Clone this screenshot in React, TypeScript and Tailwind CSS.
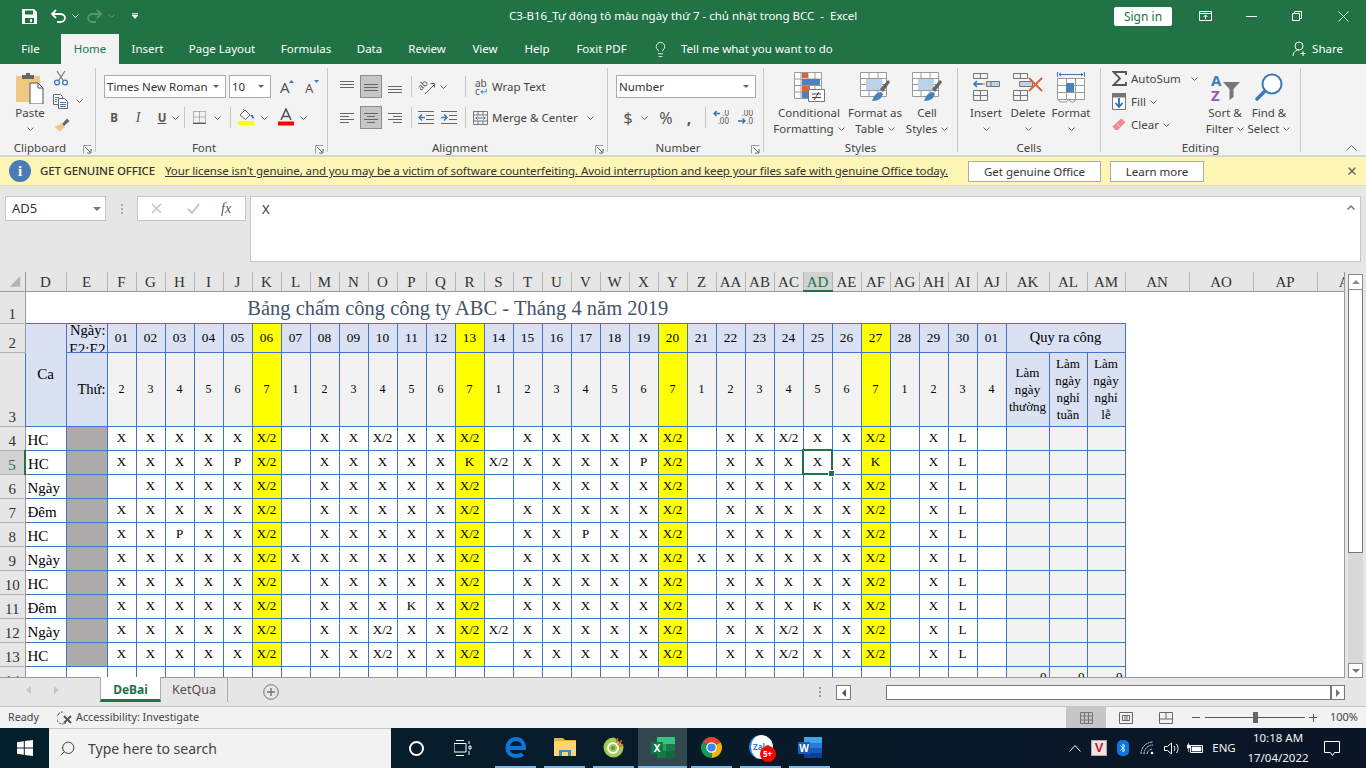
import { Lightbulb, Search, X as XIcon } from "lucide-react"
import type { ReactNode } from "react"

const Chev = ({ c = "#666" }: { c?: string }) => (
  <svg width="7" height="4" viewBox="0 0 7 4" className="shrink-0">
    <path d="M.5.5 3.5 3.5 6.5.5" fill="none" stroke={c} />
  </svg>
)

const Launcher = () => (
  <svg width="9" height="9" viewBox="0 0 9 9" className="absolute right-[3px] top-[5px]">
    <path d="M.5 8.5V.5H8.5" fill="none" stroke="#999" />
    <path d="M2.5 2.5 7.5 7.5M8 4V8H4" fill="none" stroke="#666" />
  </svg>
)

const Sep = () => <div className="w-px h-[84px] bg-[#c6c6c6] self-center shrink-0" />
const MiniSep = () => <div className="w-px h-[21px] bg-[#c6c6c6] shrink-0" />

function Group({ label, className, launcher, children }: { label: string; className: string; launcher?: boolean; children: ReactNode }) {
  return (
    <div className={`flex flex-col h-full shrink-0 ${className}`}>
      <div className="h-[76px] flex shrink-0">{children}</div>
      <div className={`h-4 shrink-0 leading-4 text-center relative text-[#444] ${launcher ? "pr-[15px]" : ""}`}>
        {label}
        {launcher && <Launcher />}
      </div>
    </div>
  )
}

function LargeBtn({ icon, l1, l2, className }: { icon: ReactNode; l1: string; l2?: string; className: string }) {
  return (
    <div className={`flex flex-col items-center pt-2 shrink-0 ${className}`}>
      <div className="h-[30px] flex items-center justify-center">{icon}</div>
      <div className="mt-[3px] leading-4 whitespace-nowrap">{l1}</div>
      <div className="h-4 leading-4 flex items-center gap-1 whitespace-nowrap">
        {l2}
        <Chev />
      </div>
    </div>
  )
}

// ---- ribbon icons
const PasteIcon = () => (
  <svg width="30" height="32" viewBox="0 0 30 32">
    <path d="M1 4h24v26H1z" fill="#eec983" />
    <path d="M7 3h4V1h4v2h4v4H7z" fill="#666" />
    <path d="M15 11h8l5 5v16H15z" fill="#fff" stroke="#555" />
    <path d="M23 11v5h5" fill="none" stroke="#555" />
  </svg>
)
const CutIcon = () => (
  <svg width="16" height="16" viewBox="0 0 16 16">
    <path d="M4 1 10 10M12 1 6 10" stroke="#777" strokeWidth="1.2" fill="none" />
    <circle cx="4" cy="12.5" r="2.4" fill="none" stroke="#3e7ab5" strokeWidth="1.3" />
    <circle cx="12" cy="12.5" r="2.4" fill="none" stroke="#3e7ab5" strokeWidth="1.3" />
  </svg>
)
const CopyIcon = () => (
  <svg width="16" height="15" viewBox="0 0 16 15">
    <path d="M.5.5h7l2 2V4M.5.5v10H5" fill="none" stroke="#666" />
    <path d="M5.5 4.5h6l3 3v7h-9z" fill="#fff" stroke="#666" />
    <path d="M2 3.5h4M2 5.5h2M2 7.5h2M7 8.5h6M7 10.5h6M7 12.5h6" stroke="#3e7ab5" />
  </svg>
)
const BrushIcon = () => (
  <svg width="17" height="15" viewBox="0 0 17 15">
    <path d="M9 7 14 1.5l2.500 2.500L11 9z" fill="#666" />
    <path d="M8 6 12 10 7 14.500 1 9.500 4 9z" fill="#eec983" />
  </svg>
)
const GrowIcon = ({ down }: { down?: boolean }) => (
  <svg width="15" height="15" viewBox="0 0 15 15">
    <text x="0" y="14" fontSize={down ? 13 : 15} fill="#555" fontFamily="Noto Sans, sans-serif">A</text>
    <path d={down ? "M9 1h5l-2.500 3z" : "M9 4h5L11.500 1z"} fill="#3e7ab5" />
  </svg>
)
const BorderIcon = () => (
  <svg width="13" height="13" viewBox="0 0 13 13">
    <path d="M.5.5h12v11H.5zM6.500.5v11M.5 6h12" fill="none" stroke="#777" strokeDasharray="1 1" />
    <path d="M0 12.500h13" stroke="#555" />
  </svg>
)
const FillIcon = () => (
  <svg width="17" height="18" viewBox="0 0 17 18">
    <path d="M2 7 7 2l5 5-4.500 4.500z" fill="#fff" stroke="#666" />
    <path d="M5 1 7 3" stroke="#666" />
    <path d="M12 7h3l1 3-1 1z" fill="#3e7ab5" />
    <path d="M0 13h16v4H0z" fill="#ffff00" />
  </svg>
)
const FontColorIcon = () => (
  <svg width="16" height="18" viewBox="0 0 16 18">
    <path d="M3 12 8 1l5 11M5 8.500h6" fill="none" stroke="#555" strokeWidth="1.600" />
    <path d="M0 13.500h16v4H0z" fill="#ff0000" />
  </svg>
)
const Lines = ({ rows }: { rows: [number, number, number][] }) => (
  <svg width="14" height="14" viewBox="0 0 14 14" className="shrink-0">
    {rows.map(([x, y, w], i) => (
      <path key={i} d={`M${x} ${y}.5h${w}`} stroke="#666" />
    ))}
  </svg>
)
const OrientIcon = () => (
  <svg width="17" height="17" viewBox="0 0 17 17">
    <text x="0" y="0" fontSize="9" fill="#555" fontFamily="Noto Sans, sans-serif" transform="translate(3 13) rotate(-45)">ab</text>
    <path d="M7 16 16 7M12.500 5.500H16.500V9.500" fill="none" stroke="#555" />
  </svg>
)
const IndentIcon = ({ rev }: { rev?: boolean }) => (
  <svg width="16" height="13" viewBox="0 0 16 13">
    <path d="M0 .5h16M8 4.500h8M8 8.500h8M0 12.500h16" stroke="#666" />
    <path d={rev ? "M1 6.500h6M4 3.500l-3 3 3 3" : "M0 6.500h6M3 3.500l3 3-3 3"} fill="none" stroke="#3e7ab5" strokeWidth="1.500" />
  </svg>
)
const MergeIcon = () => (
  <svg width="15" height="14" viewBox="0 0 15 14">
    <path d="M.5.5h14v13H.5zM.5 4h14M.5 10h14M5 .5V4M10 .5V4M5 10v3.500M10 10v3.500" fill="none" stroke="#777" />
    <path d="M2.500 7h10M4.500 5.500 3 7l1.500 1.500M10.500 5.500 12 7l-1.500 1.500" fill="none" stroke="#3e7ab5" />
  </svg>
)
const DecIcon = ({ rev }: { rev?: boolean }) => (
  <svg width="16" height="15" viewBox="0 0 16 15">
    <text x="16" y="6" textAnchor="end" fontSize="8" fill="#555" fontFamily="Noto Sans, sans-serif">{rev ? ".00" : ".0"}</text>
    <text x="16" y="14" textAnchor="end" fontSize="8" fill="#555" fontFamily="Noto Sans, sans-serif">{rev ? ".0" : ".00"}</text>
    <path d={rev ? "M1 11h7M5.500 8.500 8 11l-2.500 2.500" : "M1 3.500h6M3.500 1 1 3.500 3.500 6"} fill="none" stroke="#2e6fb0" strokeWidth="1.300" />
  </svg>
)
const CondIcon = () => (
  <svg width="31" height="30" viewBox="0 0 31 30">
    <path d="M.5.5h27v26H.5zM.5 7h27M.5 13.500h27M.5 20h27M7 .5v26M14 .5v26M21 .5v26" fill="#fff" stroke="#9a9a9a" />
    <path d="M8 1h6v5H8zM8 14h8v6H8z" fill="#d9643a" />
    <path d="M8 7h18v6H8zM8 20h6v6H8z" fill="#4a82bd" />
    <path d="M14.500 17.500h16v12h-16z" fill="#fff" stroke="#777" />
    <path d="M18 22h9M18 25.500h9M25 20l-5 8" stroke="#444" fill="none" />
  </svg>
)
const TableIcon = () => (
  <svg width="31" height="30" viewBox="0 0 31 30">
    <path d="M.5.5h26v24H.5zM.5 6.500h26M.5 12.500h26M.5 18.500h26M9 .5v24M18 .5v24" fill="#fff" stroke="#9a9a9a" />
    <path d="M6 7h16v11H6z" fill="#bcd1ea" />
    <path d="M20 17 28 8l2 2-7 10z" fill="#666" />
    <path d="M12 29c2-6 5-9 9-9l2 2c-1 4-4 7-11 7z" fill="#4a82bd" />
  </svg>
)
const InsertIcon = () => (
  <svg width="27" height="28" viewBox="0 0 27 28">
    <path d="M.5.5h14v5H.5zM7.500.5v5M.5 17.500h14v10H.5zM.5 22.500h14M7.500 17.500v10" fill="none" stroke="#777" />
    <path d="M13.500 8.500h13v5h-13z" fill="#bcd1ea" stroke="#777" />
    <path d="M18 8.500v5M3 11h9" stroke="#777" fill="none" />
    <path d="M1 11h8M4 8l-3 3 3 3" fill="none" stroke="#3e7ab5" strokeWidth="1.600" />
  </svg>
)
const DeleteIcon = () => (
  <svg width="30" height="28" viewBox="0 0 30 28">
    <path d="M.5.5h14v5H.5zM7.500.5v5M.5 17.500h14v10H.5zM.5 22.500h14M7.500 17.500v10" fill="none" stroke="#777" />
    <path d="M6.500 8.500h13v5h-13z" fill="#bcd1ea" stroke="#777" />
    <path d="M16 5 29 18M29 5 16 18" stroke="#d9643a" strokeWidth="2" />
  </svg>
)
const FormatIcon = () => (
  <svg width="28" height="31" viewBox="0 0 28 31">
    <path d="M.5 0v5M27.500 0v5M2 2.500h24M4 1 2 2.500 4 4M24 1l2 1.500L24 4" fill="none" stroke="#3e7ab5" />
    <path d="M.5 6.500h27v21H.5zM.5 13.500h27M.5 20.500h27M9.500 6.500v21M18.500 6.500v21" fill="#fff" stroke="#9a9a9a" />
    <path d="M9 11h8v9H9z" fill="#4a82bd" />
    <path d="M1 27.500 3 30h6l3-2.500M12 27.500 14 30h3l2-2.500" fill="none" stroke="#9a9a9a" />
  </svg>
)
const SumIcon = () => (
  <svg width="15" height="15" viewBox="0 0 15 15" className="shrink-0">
    <path d="M14 4V1H1.500L8 7.500 1.500 14H14v-3" fill="none" stroke="#555" strokeWidth="1.800" />
  </svg>
)
const FillDownIcon = () => (
  <svg width="14" height="17" viewBox="0 0 14 17" className="shrink-0">
    <path d="M0 0h14v4H0z" fill="#777" />
    <path d="M.5 4h13v12.500H.5z" fill="#fff" stroke="#777" />
    <path d="M7 5v9M3.500 10 7 14l3.500-4" fill="none" stroke="#2e6fb0" strokeWidth="1.800" />
  </svg>
)
const EraserIcon = () => (
  <svg width="14" height="13" viewBox="0 0 14 13" className="shrink-0">
    <path d="M9 .5 13.500 4 6 12H3L.5 8.500z" fill="#ec8a98" />
    <path d="M4.500 5 8 9" stroke="#f7c6cd" />
  </svg>
)
const SortIcon = () => (
  <svg width="31" height="29" viewBox="0 0 31 29">
    <text x="1" y="13" fontSize="15" fontWeight="700" fill="#3e7ab5" fontFamily="Noto Sans, sans-serif">A</text>
    <text x="1" y="28" fontSize="15" fontWeight="700" fill="#8e5bb5" fontFamily="Noto Sans, sans-serif">Z</text>
    <path d="M13 9h17l-6.500 7v8l-4 3V16z" fill="#777" />
  </svg>
)
const FindIcon = () => (
  <svg width="28" height="29" viewBox="0 0 28 29">
    <circle cx="17" cy="11" r="9.500" fill="#fff" stroke="#3e7ab5" strokeWidth="2" />
    <path d="M10 18 2 26" stroke="#3e7ab5" strokeWidth="3.500" strokeLinecap="round" />
  </svg>
)

// ---- sheet data
const colNames = ["D", "E", "F", "G", "H", "I", "J", "K", "L", "M", "N", "O", "P", "Q", "R", "S", "T", "U", "V", "W", "X", "Y", "Z", "AA", "AB", "AC", "AD", "AE", "AF", "AG", "AH", "AI", "AJ", "AK", "AL", "AM", "AN", "AO", "AP", "AQ"]
const days = ["01", "02", "03", "04", "05", "06", "07", "08", "09", "10", "11", "12", "13", "14", "15", "16", "17", "18", "19", "20", "21", "22", "23", "24", "25", "26", "27", "28", "29", "30", "01"]
const yellow = [5, 12, 19, 26]

const rows: [string, string, string][] = [
  ["4", "HC", "X X X X X X/2 _ X X X/2 X X X/2 _ X X X X X X/2 _ X X X/2 X X X/2 _ X L _"],
  ["5", "HC", "X X X X P X/2 _ X X X X X K X/2 X X X X P X/2 _ X X X X X K _ X L _"],
  ["6", "Ngày", "_ X X X X X/2 _ X X X X X X/2 _ _ X X X X X/2 _ X X X X X X/2 _ X L _"],
  ["7", "Đêm", "X X X X X X/2 _ X X X X X X/2 _ X X X X X X/2 _ X X X X X X/2 _ X L _"],
  ["8", "HC", "X X P X X X/2 _ X X X X X X/2 _ X X P X X X/2 _ X X X X X X/2 _ X L _"],
  ["9", "Ngày", "X X X X X X/2 X X X X X X X/2 _ X X X X X X/2 X X X X X X X/2 _ X L _"],
  ["10", "HC", "X X X X X X/2 _ X X X X X X/2 _ X X X X X X/2 _ X X X X X X/2 _ X L _"],
  ["11", "Đêm", "X X X X X X/2 _ X X X K X X/2 _ X X X X X X/2 _ X X X K X X/2 _ X L _"],
  ["12", "Ngày", "X X X X X X/2 _ X X X/2 X X X/2 X/2 X X X X X X/2 _ X X X/2 X X X/2 _ X L _"],
  ["13", "HC", "X X X X X X/2 _ X X X/2 X X X/2 _ X X X X X X/2 _ X X X/2 X X X/2 _ X L _"],
]

const bd = "border border-[#4472c4] p-0"
const cell = `${bd} text-center align-middle`
const rowHead = "border-b border-r border-b-[#b4b4b4] border-r-[#9a9a9a] bg-[#e6e6e6] text-[15px] text-[#333] text-center align-bottom p-0 pb-[1px]"

function Sheet() {
  return (
    <table className="table-fixed border-collapse w-[1382px] font-['Liberation_Serif',serif] text-[13px] leading-none text-black">
      <colgroup>
        <col className="w-[25px]" />
        <col className="w-[41px]" />
        <col className="w-[41px]" />
        {days.map((_, i) => (
          <col key={i} className="w-[29px]" />
        ))}
        <col className="w-[43px]" />
        <col className="w-[38px]" />
        <col className="w-[38px]" />
        <col className="w-[64px]" />
        <col className="w-[64px]" />
        <col className="w-[64px]" />
        <col className="w-[65px]" />
      </colgroup>
      <tbody>
        <tr className="h-[19px]">
          <th className="p-0 bg-[#e6e6e6] border-r border-b border-[#9a9a9a]">
            <svg width="24" height="18" viewBox="0 0 25 18" className="block">
              <path d="M21 4v11H10z" fill="#b4b4b4" />
            </svg>
          </th>
          {colNames.map((n) => (
            <th
              key={n}
              className={
                n === "AD"
                  ? "p-0 pt-[2px] bg-[#d2d2d2] border-r border-r-[#b4b4b4] border-b-2 border-b-[#217346] text-[15px] font-normal text-[#217346]"
                  : "p-0 pt-[2px] bg-[#e6e6e6] border-r border-r-[#b4b4b4] border-b border-b-[#9a9a9a] text-[15px] font-normal text-[#333] overflow-hidden"
              }
            >
              {n}
            </th>
          ))}
        </tr>
        <tr className="h-[32px]">
          <td className={rowHead}>1</td>
          <td colSpan={29} className="p-0 text-center align-bottom pb-[4px] text-[20.5px] text-[#44546a]">
            Bảng chấm công công ty ABC - Tháng 4 năm 2019
          </td>
          <td colSpan={11} />
        </tr>
        <tr className="h-[29px]">
          <td className={rowHead}>2</td>
          <td rowSpan={2} className={`${cell} bg-[#d9e1f2] text-[15px]`}>
            Ca
          </td>
          <td className={`${bd} bg-[#d9e1f2]`}>
            <div className="h-[28px] overflow-hidden flex flex-col items-end pr-px text-[14.5px] leading-[19px]">
              <div className="-mt-[3px]">Ngày:</div>
              <div>E2:E2</div>
            </div>
          </td>
          {days.map((d, i) => (
            <td key={i} className={`${cell} text-[13.33px] ${yellow.includes(i) ? "bg-[#ffff00]" : "bg-[#d9e1f2]"}`}>
              {d}
            </td>
          ))}
          <td colSpan={3} className={`${cell} bg-[#d9e1f2] text-[14.5px]`}>
            Quy ra công
          </td>
          <td colSpan={4} />
        </tr>
        <tr className="h-[74px]">
          <td className={rowHead}>3</td>
          <td className={`${bd} align-middle bg-[#d9e1f2] text-[14.5px] text-right pr-px`}>Thứ:</td>
          {days.map((_, i) => (
            <td key={i} className={`${cell} text-[12px] ${yellow.includes(i) ? "bg-[#ffff00]" : "bg-[#f2f2f2]"}`}>
              {((i + 1) % 7) + 1}
            </td>
          ))}
          <td className={`${cell} bg-[#d9e1f2] leading-[17px]`}>
            Làm
            <br />
            ngày
            <br />
            thường
          </td>
          <td className={`${cell} bg-[#d9e1f2] leading-[17px]`}>
            Làm
            <br />
            ngày
            <br />
            nghỉ
            <br />
            tuần
          </td>
          <td className={`${cell} bg-[#d9e1f2] leading-[17px]`}>
            Làm
            <br />
            ngày
            <br />
            nghỉ
            <br />
            lễ
          </td>
          <td colSpan={4} />
        </tr>
        {rows.map(([num, ca, data]) => (
          <tr key={num} className="h-[24px]">
            <td className={num === "5" ? "p-0 pb-[1px] bg-[#d2d2d2] border-r-2 border-r-[#217346] border-b border-b-[#b4b4b4] text-[15px] text-[#217346] text-center align-bottom" : rowHead}>{num}</td>
            <td className={`${bd} text-left align-bottom pl-[2px] pb-[2px] text-[15px] whitespace-nowrap`}>{ca}</td>
            <td className={`${bd} bg-[#aeaaaa]`} />
            {data.split(" ").map((v, i) => (
              <td key={i} className={`${cell} pb-[2px] relative ${yellow.includes(i) ? "bg-[#ffff00]" : ""}`}>
                {v === "_" ? "" : v}
                {num === "5" && i === 24 && (
                  <div className="absolute -left-[2px] -top-[2px] w-[31px] h-[26px] border-2 border-[#217346]">
                    <div className="absolute -right-[4px] -bottom-[4px] w-[7px] h-[7px] bg-[#217346] border border-white" />
                  </div>
                )}
              </td>
            ))}
            <td className={`${cell} bg-[#f2f2f2]`} />
            <td className={`${cell} bg-[#f2f2f2]`} />
            <td className={`${cell} bg-[#f2f2f2]`} />
            <td colSpan={4} />
          </tr>
        ))}
        <tr className="h-[24px]">
          <td className={rowHead}>14</td>
          <td className={cell} />
          <td className={cell} />
          {days.map((_, i) => (
            <td key={i} className={cell} />
          ))}
          <td className={`${bd} bg-[#f2f2f2] text-right pr-[2px] align-bottom pb-[7px]`}>0</td>
          <td className={`${bd} bg-[#f2f2f2] text-right pr-[2px] align-bottom pb-[7px]`}>0</td>
          <td className={`${bd} bg-[#f2f2f2] text-right pr-[2px] align-bottom pb-[7px]`}>0</td>
          <td colSpan={4} />
        </tr>
      </tbody>
    </table>
  )
}

// ---- taskbar logos
const WinLogo = () => (
  <svg width="16" height="16" viewBox="0 0 16 16">
    <path d="M0 2.200 6.800 1.200V7.500H0zM7.800 1 16 0V7.500H7.800zM0 8.500H6.800V14.800L0 13.800zM7.800 8.500H16V16L7.800 15z" fill="#fff" />
  </svg>
)
const TaskView = () => (
  <svg width="18" height="16" viewBox="0 0 18 16">
    <path d="M0 3.500h12V12H0zM2 .5h8M2 15.500h8" fill="none" stroke="#fff" />
    <path d="M15 1v3M15 6h2v3h-2zM15 11v4" stroke="#fff" fill="none" />
  </svg>
)
const EdgeLogo = () => (
  <svg width="22" height="22" viewBox="0 0 22 22">
    <path d="M3 12h16c0-5-3-9-8-9S2.500 7 2.500 12c0 5 4 8 9 8 3 0 5-1 6-2" fill="none" stroke="#0a78d7" strokeWidth="4" />
  </svg>
)
const FolderLogo = () => (
  <svg width="22" height="18" viewBox="0 0 22 18">
    <path d="M0 0h9l2 2h11v16H0z" fill="#e7b33f" />
    <path d="M0 3h22v15H0z" fill="#fdd66d" />
    <path d="M5 15v-3h12v3h-3v-1H8v1z" fill="#3d88c9" />
    <path d="M5 15h3v3H5zM14 15h3v3h-3z" fill="#3d88c9" />
  </svg>
)
const CocCocLogo = () => (
  <svg width="21" height="21" viewBox="0 0 21 21">
    <circle cx="10.500" cy="10.500" r="10" fill="#9ccb57" />
    <path d="M11 0h10v9z" fill="#041b28" />
    <circle cx="10" cy="11" r="5" fill="none" stroke="#fff" strokeWidth="2" />
    <circle cx="10" cy="11" r="2" fill="#5f9e2f" />
    <path d="M13 6 15 1M15 8 19 3M16 10 20 7" stroke="#e2572c" strokeWidth="1.500" />
  </svg>
)
const ExcelLogo = () => (
  <svg width="24" height="21" viewBox="0 0 24 21">
    <path d="M6 0h18v7H6z" fill="#33c481" />
    <path d="M6 7h18v7H6z" fill="#21a366" />
    <path d="M6 14h18v7H6z" fill="#107c41" />
    <path d="M15 7h9v7h-9zM15 14h9v7h-9z" fill="#185c37" opacity=".6" />
    <path d="M0 5h12v12H0z" fill="#107c41" />
    <text x="6" y="15" textAnchor="middle" fontSize="10" fontWeight="700" fill="#fff" fontFamily="Noto Sans, sans-serif">X</text>
  </svg>
)
const WordLogo = () => (
  <svg width="24" height="21" viewBox="0 0 24 21">
    <path d="M6 0h18v6H6z" fill="#41a5ee" />
    <path d="M6 6h18v5H6z" fill="#2b7cd3" />
    <path d="M6 11h18v5H6z" fill="#185abd" />
    <path d="M6 16h18v5H6z" fill="#103f91" />
    <path d="M0 5h12v12H0z" fill="#185abd" />
    <text x="6" y="15" textAnchor="middle" fontSize="10" fontWeight="700" fill="#fff" fontFamily="Noto Sans, sans-serif">W</text>
  </svg>
)
const ChromeLogo = () => (
  <svg width="23" height="23" viewBox="0 0 24 24">
    <path d="M12 12 2.500 6.500A11 11 0 0 1 21.500 6.500z" fill="#db4437" />
    <path d="M12 12 21.500 6.500A11 11 0 0 1 12 23z" fill="#f4b400" />
    <path d="M12 12 12 23A11 11 0 0 1 2.500 6.500z" fill="#0f9d58" />
    <circle cx="12" cy="12" r="5.500" fill="#fff" />
    <circle cx="12" cy="12" r="4.300" fill="#4285f4" />
  </svg>
)

function TaskApp({ children, active }: { children: ReactNode; active?: boolean }) {
  return (
    <div className={`w-[49px] h-full flex flex-col shrink-0 ${active ? "bg-[#33474f]" : ""}`}>
      <div className="flex-1 flex items-center justify-center">{children}</div>
      <div className={`h-[2px] bg-[#76b9ed] ${active ? "" : "mx-1"}`} />
    </div>
  )
}

export default function App() {
  const tabs = [
    ["File", "w-[61px]"],
    ["Home", "w-[58px]"],
    ["Insert", "w-[57px]"],
    ["Page Layout", "w-[92px]"],
    ["Formulas", "w-[76px]"],
    ["Data", "w-[51px]"],
    ["Review", "w-[64px]"],
    ["View", "w-[52px]"],
    ["Help", "w-[52px]"],
    ["Foxit PDF", "w-[77px]"],
  ]

  return (
    <div className="w-[1366px] h-[768px] overflow-hidden flex flex-col bg-[#e6e6e6] font-['Noto_Sans',sans-serif] text-[11.5px] text-[#444]">
      {/* title bar */}
      <div className="h-8 bg-[#217346] flex items-center text-white shrink-0">
        <div className="w-[509px] flex items-center pl-[22px] shrink-0">
          <svg width="15" height="15" viewBox="0 0 15 15">
            <path d="M0 0h12l3 3v12H0z" fill="#fff" />
            <path d="M3 1.500h8v4H3z" fill="#217346" />
            <path d="M3 9h9v5H3z" fill="#217346" />
            <path d="M8 10h2v3H8z" fill="#fff" />
          </svg>
          <svg width="15" height="14" viewBox="0 0 15 14" className="ml-[14px]">
            <path d="M5 1 1 5l4 4M1 5h8c3 0 5 2 5 4s-2 4-5 4H6" fill="none" stroke="#fff" strokeWidth="1.800" />
          </svg>
          <div className="ml-[6px]">
            <Chev c="#fff" />
          </div>
          <svg width="15" height="14" viewBox="0 0 15 14" className="ml-[8px]">
            <path d="M10 1l4 4-4 4M14 5H6C3 5 1 7 1 9s2 4 5 4h3" fill="none" stroke="#5c9476" strokeWidth="1.800" />
          </svg>
          <div className="ml-[6px]">
            <Chev c="#5c9476" />
          </div>
          <svg width="6" height="6" viewBox="0 0 6 6" className="ml-[17px]">
            <path d="M0 .5h6M0 2h6l-3 3.500z" stroke="#fff" strokeWidth=".7" fill="#fff" />
          </svg>
        </div>
        <div className="w-[605px] shrink-0 whitespace-pre">C3-B16_Tự động tô màu ngày thứ 7 - chủ nhật trong BCC  -  Excel</div>
        <div className="w-[58px] h-[19px] bg-white rounded-[2px] text-[#217346] text-center leading-[19px] text-[12px] shrink-0">Sign in</div>
        <div className="w-[194px] flex items-center shrink-0">
          <svg width="13" height="10" viewBox="0 0 13 10" className="ml-[27px]">
            <path d="M.5.5h12v9H.5zM.5 2.500h12M6.500 8V4M4.500 6l2-2 2 2" fill="none" stroke="#fff" />
          </svg>
          <svg width="11" height="1" viewBox="0 0 11 1" className="ml-[34px]">
            <path d="M0 .5h11" stroke="#fff" />
          </svg>
          <svg width="10" height="10" viewBox="0 0 10 10" className="ml-[35px]">
            <path d="M.5 2.500h7v7h-7zM2.500 2.500v-2h7v7h-2" fill="none" stroke="#fff" />
          </svg>
          <svg width="11" height="11" viewBox="0 0 11 11" className="ml-[36px]">
            <path d="M.5.5l10 10M10.500.5l-10 10" stroke="#fff" />
          </svg>
        </div>
      </div>

      {/* ribbon tabs */}
      <div className="h-8 bg-[#217346] flex items-end text-white shrink-0">
        {tabs.map(([t, w]) => (
          <div key={t} className={`${w} h-[30px] leading-[29px] text-center shrink-0 ${t === "Home" ? "bg-[#f3f3f3] text-[#217346]" : ""}`}>
            {t}
          </div>
        ))}
        <div className="h-[30px] flex items-center ml-3">
          <Lightbulb size={17} strokeWidth={1.2} color="#fff" />
          <span className="ml-[12px]">Tell me what you want to do</span>
        </div>
        <div className="ml-auto h-[30px] flex items-center pr-[23px]">
          <svg width="16" height="16" viewBox="0 0 16 16">
            <circle cx="7" cy="5" r="4" fill="none" stroke="#fff" />
            <path d="M1 15c0-3 2-6 6-6M11 10v5M8.500 12.500h5" fill="none" stroke="#fff" />
          </svg>
          <span className="ml-[4px]">Share</span>
        </div>
      </div>

      {/* ribbon */}
      <div className="h-[93px] bg-[#f3f3f3] border-b-2 border-[#d5d5d5] flex shrink-0 relative">
        <Group label="Clipboard" launcher className="w-[95px]">
          <div className="w-[30px] ml-[15px] flex flex-col items-center pt-2">
            <div className="h-[30px]">
              <PasteIcon />
            </div>
            <div className="mt-[3px] leading-4">Paste</div>
            <div className="h-4 flex items-center">
              <Chev />
            </div>
          </div>
          <div className="ml-[8px] flex flex-col pt-[6px]">
            <div className="h-[16px]">
              <CutIcon />
            </div>
            <div className="h-[16px] mt-[7px] flex items-center gap-[7px]">
              <CopyIcon />
              <Chev />
            </div>
            <div className="h-[16px] mt-[8px]">
              <BrushIcon />
            </div>
          </div>
        </Group>
        <Sep />
        <Group label="Font" launcher className="w-[231px]">
          <div className="pl-2">
            <div className="flex items-center mt-[11px] h-[23px]">
              <div className="w-[122px] h-full bg-white border border-[#ababab] flex items-center justify-between pl-[2px] pr-[6px] text-[#333] whitespace-nowrap">
                Times New Roman
                <svg width="6" height="3" viewBox="0 0 6 3">
                  <path d="M0 0h6L3 3z" fill="#666" />
                </svg>
              </div>
              <div className="w-[42px] ml-[3px] h-full bg-white border border-[#ababab] flex items-center justify-between pl-[2px] pr-[6px] text-[#333]">
                10
                <svg width="6" height="3" viewBox="0 0 6 3">
                  <path d="M0 0h6L3 3z" fill="#666" />
                </svg>
              </div>
              <div className="ml-[9px]">
                <GrowIcon />
              </div>
              <div className="ml-[10px]">
                <GrowIcon down />
              </div>
            </div>
            <div className="flex items-center mt-[9px] h-[21px] text-[#555]">
              <div className="w-5 text-center font-bold">B</div>
              <div className="w-7 text-center italic font-['Liberation_Serif',serif] text-[14px]">I</div>
              <div className="w-5 text-center font-bold underline">U</div>
              <Chev />
              <div className="ml-[5px]">
                <MiniSep />
              </div>
              <div className="ml-[8px]">
                <BorderIcon />
              </div>
              <div className="ml-[8px]">
                <Chev />
              </div>
              <div className="ml-[9px]">
                <MiniSep />
              </div>
              <div className="ml-[7px] mt-[-2px]">
                <FillIcon />
              </div>
              <div className="ml-[6px]">
                <Chev />
              </div>
              <div className="ml-[10px] mt-[-2px]">
                <FontColorIcon />
              </div>
              <div className="ml-[6px]">
                <Chev />
              </div>
            </div>
          </div>
        </Group>
        <Sep />
        <Group label="Alignment" launcher className="w-[279px]">
          <div className="pl-3">
            <div className="flex items-center mt-[11px] h-[23px]">
              <Lines rows={[[0, 1, 14], [0, 4, 14], [0, 7, 14]]} />
              <div className="w-[22px] h-full ml-[6px] bg-[#c6c6c6] border border-[#8c8c8c] flex items-center justify-center">
                <Lines rows={[[0, 4, 14], [0, 7, 14], [0, 10, 14]]} />
              </div>
              <div className="ml-[6px]">
                <Lines rows={[[0, 6, 14], [0, 9, 14], [0, 12, 14]]} />
              </div>
              <div className="ml-[9px]">
                <MiniSep />
              </div>
              <div className="ml-[6px]">
                <OrientIcon />
              </div>
              <div className="ml-[5px]">
                <Chev />
              </div>
              <div className="ml-[18px]">
                <MiniSep />
              </div>
              <div className="ml-[9px] w-[14px] text-[10px] leading-[8px] text-[#555]">
                ab
                <br />
                c<span className="text-[#3e7ab5]">↵</span>
              </div>
              <span className="ml-[3px]">Wrap Text</span>
            </div>
            <div className="flex items-center mt-[8px] h-[23px]">
              <Lines rows={[[0, 2, 14], [0, 5, 9], [0, 8, 14], [0, 11, 9]]} />
              <div className="w-[22px] h-full ml-[6px] bg-[#c6c6c6] border border-[#8c8c8c] flex items-center justify-center">
                <Lines rows={[[0, 2, 14], [3, 5, 8], [0, 8, 14], [3, 11, 8]]} />
              </div>
              <div className="ml-[6px]">
                <Lines rows={[[0, 2, 14], [5, 5, 9], [0, 8, 14], [5, 11, 9]]} />
              </div>
              <div className="ml-[9px]">
                <MiniSep />
              </div>
              <div className="ml-[6px]">
                <IndentIcon rev />
              </div>
              <div className="ml-[7px]">
                <IndentIcon />
              </div>
              <div className="ml-[8px]">
                <MiniSep />
              </div>
              <div className="ml-[7px]">
                <MergeIcon />
              </div>
              <span className="ml-[4px] w-[95px] whitespace-nowrap">Merge &amp; Center</span>
              <Chev />
            </div>
          </div>
        </Group>
        <Sep />
        <Group label="Number" launcher className="w-[155px]">
          <div className="pl-2">
            <div className="flex items-center mt-[11px] h-[23px]">
              <div className="w-[140px] h-full bg-white border border-[#ababab] flex items-center justify-between pl-[2px] pr-[6px] text-[#333]">
                Number
                <svg width="6" height="3" viewBox="0 0 6 3">
                  <path d="M0 0h6L3 3z" fill="#666" />
                </svg>
              </div>
            </div>
            <div className="flex items-center mt-[9px] h-[21px] pl-[6px] text-[#555]">
              <span className="w-3 text-center text-[16px]">$</span>
              <div className="ml-[7px]">
                <Chev />
              </div>
              <span className="ml-[10px] w-4 text-center text-[16px]">%</span>
              <span className="ml-[10px] w-[10px] text-center text-[16px] font-bold">,</span>
              <div className="ml-[11px]">
                <MiniSep />
              </div>
              <div className="ml-[7px]">
                <DecIcon />
              </div>
              <div className="ml-[8px]">
                <DecIcon rev />
              </div>
            </div>
          </div>
        </Group>
        <Sep />
        <Group label="Styles" className="w-[193px]">
          <LargeBtn className="w-[70px] ml-[10px]" icon={<CondIcon />} l1="Conditional" l2="Formatting" />
          <LargeBtn className="w-[62px]" icon={<TableIcon />} l1="Format as" l2="Table" />
          <LargeBtn className="w-[42px]" icon={<TableIcon />} l1="Cell" l2="Styles" />
        </Group>
        <Sep />
        <Group label="Cells" className="w-[142px]">
          <div className="ml-[8px] w-10 flex flex-col items-center pt-2">
            <div className="h-[30px] flex items-center">
              <InsertIcon />
            </div>
            <div className="mt-[3px] leading-4">Insert</div>
            <div className="h-4 flex items-center">
              <Chev />
            </div>
          </div>
          <div className="w-11 flex flex-col items-center pt-2">
            <div className="h-[30px] flex items-center">
              <DeleteIcon />
            </div>
            <div className="mt-[3px] leading-4">Delete</div>
            <div className="h-4 flex items-center">
              <Chev />
            </div>
          </div>
          <div className="w-[42px] flex flex-col items-center pt-2">
            <div className="h-[30px] flex items-center">
              <FormatIcon />
            </div>
            <div className="mt-[3px] leading-4">Format</div>
            <div className="h-4 flex items-center">
              <Chev />
            </div>
          </div>
        </Group>
        <Sep />
        <Group label="Editing" className="w-[199px]">
          <div className="w-[103px] pl-[11px] pt-[3px] shrink-0">
            <div className="h-[23px] flex items-center">
              <SumIcon />
              <span className="ml-[4px] w-[60px] shrink-0">AutoSum</span>
              <Chev />
            </div>
            <div className="h-[23px] flex items-center">
              <FillDownIcon />
              <span className="ml-[5px]">Fill</span>
              <span className="ml-[4px]">
                <Chev />
              </span>
            </div>
            <div className="h-[23px] flex items-center">
              <EraserIcon />
              <span className="ml-[5px]">Clear</span>
              <span className="ml-[4px]">
                <Chev />
              </span>
            </div>
          </div>
          <LargeBtn className="w-[42px]" icon={<SortIcon />} l1="Sort &" l2="Filter" />
          <LargeBtn className="w-[44px] ml-px" icon={<FindIcon />} l1="Find &" l2="Select" />
        </Group>
        <Sep />
        <svg width="11" height="6" viewBox="0 0 11 6" className="absolute left-[1346px] bottom-[4px]">
          <path d="M.5 5.500l5-5 5 5" fill="none" stroke="#666" />
        </svg>
      </div>

      {/* genuine office bar */}
      <div className="h-[29px] bg-[#fdf6b5] border-b border-[#e6e08c] flex items-center shrink-0 text-[#333]">
        <div className="ml-[9px] w-[22px] h-[22px] rounded-full bg-[#4a7db5] text-white flex items-center justify-center font-bold text-[15px] font-['Liberation_Serif',serif]">i</div>
        <div className="w-[125px] ml-[9px] whitespace-nowrap font-medium tracking-[-0.15px]">GET GENUINE OFFICE</div>
        <div className="w-[803px] underline whitespace-nowrap tracking-[-0.1px]">Your license isn't genuine, and you may be a victim of software counterfeiting. Avoid interruption and keep your files safe with genuine Office today.</div>
        <div className="w-[133px] h-[21px] bg-white border border-[#ababab] text-center leading-[19px] shrink-0">Get genuine Office</div>
        <div className="w-[94px] h-[21px] ml-[9px] bg-white border border-[#ababab] text-center leading-[19px] shrink-0">Learn more</div>
        <XIcon size={12} strokeWidth={3} color="#666" className="ml-[142px]" />
      </div>

      {/* formula bar */}
      <div className="h-[86px] pt-[10px] pl-[5px] flex items-start shrink-0">
        <div className="w-[101px] h-[25px] bg-white border border-[#c6c6c6] flex items-center justify-between pl-[6px] pr-[4px] text-[13px] text-[#333]">
          AD5
          <svg width="8" height="4" viewBox="0 0 8 4">
            <path d="M0 0h8L4 4z" fill="#777" />
          </svg>
        </div>
        <div className="w-[31px] h-[25px] flex flex-col items-center justify-center gap-[2px]">
          <div className="w-[2px] h-[2px] bg-[#aaa]" />
          <div className="w-[2px] h-[2px] bg-[#aaa]" />
          <div className="w-[2px] h-[2px] bg-[#aaa]" />
        </div>
        <div className="w-[109px] h-[25px] bg-white border border-[#c6c6c6] flex items-center pl-[13px]">
          <svg width="11" height="11" viewBox="0 0 11 11">
            <path d="M1 1l9 9M10 1l-9 9" stroke="#c6c6c6" strokeWidth="1.600" />
          </svg>
          <svg width="13" height="11" viewBox="0 0 13 11" className="ml-[25px]">
            <path d="M1 6l4 4 7-9" fill="none" stroke="#c6c6c6" strokeWidth="2" />
          </svg>
          <span className="ml-[21px] italic font-['Liberation_Serif',serif] text-[14px] text-[#555]">fx</span>
        </div>
        <div className="w-[1111px] h-[66px] ml-1 bg-white border border-[#c6c6c6] flex justify-between pl-[11px] pt-[3px] pr-[5px] text-[13px] text-[#333]">
          X
          <svg width="8" height="5" viewBox="0 0 8 5" className="mt-[5px]">
            <path d="M.5 4.500 4 1l3.500 3.500" fill="none" stroke="#777" strokeWidth="1.500" />
          </svg>
        </div>
      </div>

      {/* sheet */}
      <div className="h-[406px] flex shrink-0">
        <div className="w-[1345px] h-full overflow-hidden bg-white border-r border-b border-[#9a9a9a] shrink-0">
          <Sheet />
        </div>
        <div className="w-[15px] ml-[3px] h-full pt-[2px] flex flex-col shrink-0">
          <div className="h-[16px] bg-white border border-[#8c8c8c] flex items-center justify-center">
            <svg width="8" height="4" viewBox="0 0 8 4">
              <path d="M4 0l4 4H0z" fill="#8c8c8c" />
            </svg>
          </div>
          <div className="h-[263px] bg-white border border-t-0 border-[#777]" />
          <div className="h-[110px] bg-[#d9d9d9]" />
          <div className="h-[15px] bg-white border border-[#8c8c8c] flex items-center justify-center">
            <svg width="8" height="4" viewBox="0 0 8 4">
              <path d="M0 0h8L4 4z" fill="#777" />
            </svg>
          </div>
        </div>
      </div>

      {/* sheet tabs */}
      <div className="h-[28px] flex items-start shrink-0">
        <div className="w-[100px] h-[24px] flex items-center pl-[26px] gap-[23px]">
          <svg width="5" height="8" viewBox="0 0 5 8">
            <path d="M5 0v8L0 4z" fill="#c6c6c6" />
          </svg>
          <svg width="5" height="8" viewBox="0 0 5 8">
            <path d="M0 0v8l5-4z" fill="#c6c6c6" />
          </svg>
        </div>
        <div className="w-[61px] h-[25px] bg-white border-x border-[#ababab] border-b-[3px] border-b-[#217346] text-center leading-[25px] text-[12px] font-bold text-[#217346] -mt-px">DeBai</div>
        <div className="w-[67px] h-[24px] text-center leading-[24px] text-[12.5px] text-[#5a4a5a] border-r border-[#ababab]">KetQua</div>
        <div className="w-[35px] h-[24px]" />
        <svg width="16" height="16" viewBox="0 0 16 16" className="mt-[6px]">
          <circle cx="8" cy="8" r="7.300" fill="none" stroke="#777" />
          <path d="M8 4v8M4 8h8" stroke="#777" strokeWidth="1.500" />
        </svg>
        <div className="w-[544px] flex justify-center mt-[9px] gap-[2px] flex-col items-end pr-[2px]">
          <div className="w-[2px] h-[2px] bg-[#999]" />
          <div className="w-[2px] h-[2px] bg-[#999]" />
          <div className="w-[2px] h-[2px] bg-[#999]" />
        </div>
        <div className="h-[15px] mt-[7px] w-[509px] flex shrink-0 ml-[13px]">
          <div className="w-[15px] bg-white border border-[#777] flex items-center justify-center">
            <svg width="4" height="8" viewBox="0 0 4 8">
              <path d="M4 0v8L0 4z" fill="#555" />
            </svg>
          </div>
          <div className="w-[35px]" />
          <div className="w-[445px] bg-white border border-[#777]" />
          <div className="w-[14px] bg-white border border-[#777] flex items-center justify-center">
            <svg width="4" height="8" viewBox="0 0 4 8">
              <path d="M0 0v8l4-4z" fill="#777" />
            </svg>
          </div>
        </div>
      </div>

      {/* status bar */}
      <div className="h-[22px] bg-[#f2f2f2] border-t border-[#c6c6c6] flex items-center shrink-0">
        <span className="ml-2 w-[49px] text-[10.8px]">Ready</span>
        <svg width="16" height="14" viewBox="0 0 16 14">
          <path d="M6 1a6 6 0 1 0 3 11M1 4l2-2" fill="none" stroke="#555" strokeDasharray="2 1" />
          <path d="M7 5l7 7M14 5l-7 7" stroke="#555" strokeWidth="2" />
        </svg>
        <span className="ml-[3px] text-[10.8px]">Accessibility: Investigate</span>
        <div className="ml-auto flex items-center h-full">
          <div className="w-10 h-full bg-[#c6c6c6] flex items-center justify-center">
            <svg width="13" height="12" viewBox="0 0 13 12">
              <path d="M.5.5h12v11H.5zM.5 4h12M.5 8h12M4.500.5v11M8.500.5v11" fill="none" stroke="#777" />
            </svg>
          </div>
          <div className="w-10 h-full flex items-center justify-center">
            <svg width="14" height="12" viewBox="0 0 14 12">
              <path d="M.5.5h13v11H.5zM3.500 3.500h7v5h-7zM5 5h4M5 7h4" fill="none" stroke="#666" />
            </svg>
          </div>
          <div className="w-10 h-full flex items-center justify-center">
            <svg width="14" height="12" viewBox="0 0 14 12">
              <path d="M.5.5h13v11H.5zM.5 7h13M7 .5V7" fill="none" stroke="#666" />
            </svg>
          </div>
          <div className="w-[8px] h-px bg-[#555] ml-[6px]" />
          <div className="w-[100px] h-px bg-[#555] ml-[5px] flex items-center justify-center">
            <div className="w-[5px] h-[11px] bg-[#666]" />
          </div>
          <div className="relative w-[8px] h-px bg-[#555] ml-[4px]">
            <div className="absolute left-[3.500px] -top-[3.500px] w-px h-[8px] bg-[#555]" />
          </div>
          <span className="w-[49px] pr-2 text-right text-[11px]">100%</span>
        </div>
      </div>

      {/* taskbar */}
      <div className="h-10 bg-gradient-to-r from-[#04202c] to-[#0a1526] flex items-center shrink-0 text-white">
        <div className="w-[49px] flex justify-center shrink-0">
          <WinLogo />
        </div>
        <div className="w-[342px] h-10 bg-[#f2f2f2] border-t border-[#c6c6c6] flex items-center pl-[11px] text-[#444] text-[14px] shrink-0">
          <Search size={17} strokeWidth={1.300} className="scale-x-[-1] mr-[12px] ml-[-1px]" color="#333" />
          Type here to search
        </div>
        <div className="w-[50px] flex justify-center shrink-0">
          <div className="w-[15px] h-[15px] rounded-full border-2 border-white" />
        </div>
        <div className="w-[50px] flex justify-center pr-[6px] shrink-0">
          <TaskView />
        </div>
        <TaskApp>
          <EdgeLogo />
        </TaskApp>
        <TaskApp>
          <FolderLogo />
        </TaskApp>
        <TaskApp>
          <CocCocLogo />
        </TaskApp>
        <TaskApp active>
          <ExcelLogo />
        </TaskApp>
        <TaskApp>
          <ChromeLogo />
        </TaskApp>
        <TaskApp>
          <div className="relative w-6 h-6 rounded-full bg-white flex items-center justify-center text-[8px] font-bold text-[#1d7fe6] border-l-2 border-[#1d7fe6]">
            Zalo
            <div className="absolute -right-[3px] -bottom-[3px] w-4 h-4 rounded-full bg-[#f00] text-white text-[8px] leading-4 text-center">5+</div>
          </div>
        </TaskApp>
        <TaskApp>
          <WordLogo />
        </TaskApp>
        <div className="flex-1" />
        <div className="flex items-center h-full text-[#f2f2f2] shrink-0">
          <div className="w-6 flex justify-center">
            <svg width="12" height="7" viewBox="0 0 12 7">
              <path d="M.5 6.500l5.500-6 5.500 6" fill="none" stroke="#fff" />
            </svg>
          </div>
          <div className="w-6 flex justify-center">
            <div className="w-4 h-4 bg-[#f3e3e3] border border-[#aaa] text-[#c8202f] font-bold text-[13px] leading-[14px] text-center font-['Liberation_Sans',sans-serif]">V</div>
          </div>
          <div className="w-[23px] flex justify-center">
            <div className="w-3 h-4 rounded-[5px] bg-[#0a78e0] flex items-center justify-center">
              <svg width="6" height="10" viewBox="0 0 6 10">
                <path d="M.5 2.500 5 7 3 9V1l2 2L.5 7.500" fill="none" stroke="#fff" strokeWidth=".8" />
              </svg>
            </div>
          </div>
          <div className="w-[26px] flex justify-center">
            <svg width="14" height="14" viewBox="0 0 14 14">
              <path d="M1 13A12 12 0 0 1 13 1M4 13a9 9 0 0 1 9-9M7 13a6 6 0 0 1 5-5" fill="none" stroke="#ddd" strokeDasharray="2 .6" />
              <circle cx="12" cy="12" r="1.300" fill="#fff" />
            </svg>
          </div>
          <div className="w-[23px] flex justify-center">
            <svg width="16" height="13" viewBox="0 0 16 13">
              <path d="M.5 4.500h3L7.500 1v11L3.500 8.500h-3zM10 4c1 1.500 1 3.500 0 5M12.500 2c2 3 2 6 0 9" fill="none" stroke="#fff" />
            </svg>
          </div>
          <div className="w-6 flex justify-center">
            <svg width="16" height="10" viewBox="0 0 16 10">
              <path d="M3.500 2.500h12v7h-12z" fill="none" stroke="#fff" />
              <path d="M5 4h9v4H5zM0 2h3v3H0zM1.500 0v2M1.500 5v4" fill="#fff" stroke="#fff" strokeWidth=".6" />
            </svg>
          </div>
          <div className="w-[34px] text-center">ENG</div>
          <div className="w-[74px] text-center leading-[20px]">
            10:18 AM
            <br />
            17/04/2022
          </div>
          <div className="w-[34px] flex justify-center">
            <svg width="16" height="15" viewBox="0 0 16 15">
              <path d="M.5.5h15v11h-5l-2 3-2-3h-6z" fill="none" stroke="#fff" />
            </svg>
          </div>
          <div className="w-[17px]" />
        </div>
      </div>
    </div>
  )
}
